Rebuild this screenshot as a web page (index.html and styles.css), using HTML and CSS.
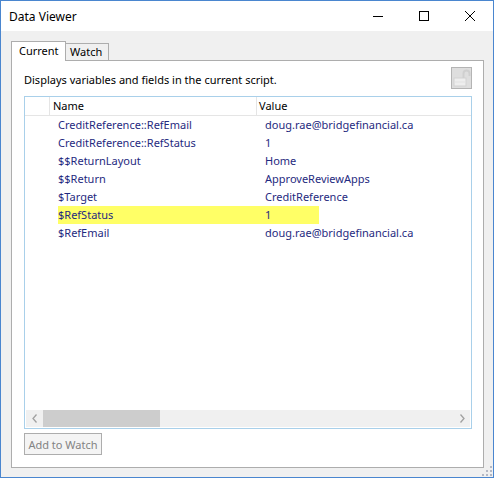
FILE: index.html
```html
<!DOCTYPE html>
<html>
<head>
<meta charset="utf-8">
<title>Data Viewer</title>
<link rel="stylesheet" href="styles.css">
</head>
<body>
<div class="window">
  <div class="titlebar">
    <span class="title">Data Viewer</span>
    <div class="caption">
      <span class="cbtn"><svg width="10" height="10" viewBox="0 0 10 10"><line x1="0" y1="5.5" x2="10" y2="5.5" stroke="#000" stroke-width="1"/></svg></span>
      <span class="cbtn"><svg width="10" height="10" viewBox="0 0 10 10"><rect x="0.5" y="0.5" width="9" height="9" fill="none" stroke="#000" stroke-width="1"/></svg></span>
      <span class="cbtn"><svg width="10" height="10" viewBox="0 0 10 10"><path d="M0 0 L10 10 M10 0 L0 10" stroke="#000" stroke-width="1"/></svg></span>
    </div>
  </div>
  <div class="client">
    <div class="tabs">
      <div class="tab active">Current</div>
      <div class="tab other">Watch</div>
    </div>
    <div class="panel">
      <div class="panel-head">
        <p class="desc">Displays variables and fields in the current script.</p>
        <span class="lock"><svg width="19" height="20" viewBox="0 0 19 20"><path d="M11.5 10 V5.5 a3 3 0 0 1 6 0 V8" fill="none" stroke="#cfcfcf" stroke-width="2"/><rect x="2" y="10" width="12" height="8" fill="#eeeeee" stroke="#d2d2d2" stroke-width="1"/><line x1="2.5" y1="14" x2="13.5" y2="14" stroke="#e2e2e2"/></svg></span>
      </div>
      <div class="list">
        <div class="lhead">
          <span class="hgut"></span>
          <span class="hname">Name</span>
          <span class="hval">Value</span>
        </div>
        <div class="row"><span></span><span>CreditReference::RefEmail</span><span>doug.rae@bridgefinancial.ca</span></div>
        <div class="row"><span></span><span>CreditReference::RefStatus</span><span>1</span></div>
        <div class="row"><span></span><span>$$ReturnLayout</span><span>Home</span></div>
        <div class="row"><span></span><span>$$Return</span><span>ApproveReviewApps</span></div>
        <div class="row"><span></span><span>$Target</span><span>CreditReference</span></div>
        <div class="row hl"><span></span><span>$RefStatus</span><span>1</span></div>
        <div class="row"><span></span><span>$RefEmail</span><span>doug.rae@bridgefinancial.ca</span></div>
        <div class="spacer"></div>
        <div class="hscroll">
          <span class="arrow"><svg width="6" height="9" viewBox="0 0 6 9"><polyline points="4.5,0.5 1,4.5 4.5,8.5" fill="none" stroke="#a0a0a0" stroke-width="1.3"/></svg></span>
          <span class="thumb"></span>
          <span class="track"></span>
          <span class="arrow"><svg width="6" height="9" viewBox="0 0 6 9"><polyline points="1.5,0.5 5,4.5 1.5,8.5" fill="none" stroke="#a0a0a0" stroke-width="1.3"/></svg></span>
        </div>
      </div>
      <button class="add" disabled>Add to Watch</button>
    </div>
    <span class="grip"><svg width="11" height="11" viewBox="0 0 11 11" shape-rendering="crispEdges"><g fill="#b4b8c4"><rect x="9" y="1" width="2" height="2"/><rect x="5" y="5" width="2" height="2"/><rect x="9" y="5" width="2" height="2"/><rect x="1" y="9" width="2" height="2"/><rect x="5" y="9" width="2" height="2"/><rect x="9" y="9" width="2" height="2"/></g></svg></span>
  </div>
</div>
</body>
</html>
```
FILE: styles.css
```css
body {
  margin: 0;
  background: #ffffff;
  font-family: "Noto Sans", "Open Sans", sans-serif;
  font-size: 11px;
  color: #000;
}

.window {
  width: 494px;
  height: 478px;
  box-sizing: border-box;
  border: 1px solid #4a86cf;
  display: flex;
  flex-direction: column;
  background: #f0f0f0;
}

.titlebar {
  height: 30px;
  flex: none;
  background: #ffffff;
  display: flex;
  align-items: center;
}

.title {
  flex: 1;
  padding-left: 8px;
  font-size: 12px;
  color: #000;
}

.caption {
  display: flex;
  height: 100%;
}

.cbtn {
  width: 46px;
  display: flex;
  align-items: center;
  justify-content: center;
}

.client {
  flex: 1;
  padding: 10px 0 0 10px;
  position: relative;
}

.tabs {
  display: flex;
  height: 19px;
}

.tab {
  box-sizing: border-box;
  border: 1px solid #adadad;
  border-bottom: none;
  white-space: nowrap;
}

.tab.active {
  width: 55px;
  height: 20px;
  background: #ffffff;
  position: relative;
  z-index: 1;
  padding-left: 7px;
  line-height: 18px;
}

.tab.other {
  width: 43px;
  height: 17px;
  margin-top: 2px;
  border-left: none;
  padding-left: 4px;
  line-height: 16px;
  background: #f0f0f0;
}

.panel {
  width: 473px;
  height: 408px;
  box-sizing: border-box;
  border: 1px solid #adadad;
  background: #ffffff;
  padding: 6px 11px 0 12px;
  display: flex;
  flex-direction: column;
}

.panel-head {
  display: flex;
  justify-content: space-between;
  height: 22px;
}

.desc {
  margin: 0;
  padding-top: 6px;
  line-height: 14px;
  white-space: nowrap;
}

.lock {
  width: 21px;
  height: 22px;
  box-sizing: border-box;
  border: 1px solid #b4b4b4;
  background: #dedede;
  display: flex;
  align-items: center;
  justify-content: center;
}

.list {
  margin-top: 7px;
  height: 333px;
  box-sizing: border-box;
  border: 1px solid #a9d0ea;
  display: flex;
  flex-direction: column;
  flex: none;
}

.lhead {
  height: 19px;
  box-sizing: border-box;
  border-bottom: 1px solid #e5e5e5;
  display: flex;
  line-height: 18px;
  flex: none;
}

.hgut {
  width: 25px;
  box-sizing: border-box;
  border-right: 1px solid #e5e5e5;
}

.hname {
  width: 207px;
  box-sizing: border-box;
  border-right: 1px solid #e5e5e5;
  padding-left: 3px;
}

.hval {
  padding-left: 2px;
}

.row {
  display: grid;
  grid-template-columns: 33px 207px 1fr;
  height: 18px;
  line-height: 18px;
  color: #1f2a80;
  white-space: nowrap;
  flex: none;
}

.row.hl {
  background: linear-gradient(to right, transparent 33px, #ffff66 33px, #ffff66 294px, transparent 294px);
}

.spacer {
  flex: 1;
}

.hscroll {
  height: 17px;
  margin: 0 1px 1px;
  background: #f0f0f0;
  display: flex;
  flex: none;
}

.arrow {
  width: 17px;
  display: flex;
  align-items: center;
  justify-content: center;
}

.thumb {
  width: 117px;
  background: #cdcdcd;
}

.track {
  flex: 1;
}

.add {
  margin-top: 4px;
  width: 78px;
  height: 22px;
  box-sizing: border-box;
  border: 1px solid #adadad;
  background: #f4f4f4;
  color: #838383;
  font-family: inherit;
  font-size: 11px;
  padding: 0;
}

.grip {
  position: absolute;
  right: 1px;
  bottom: 1px;
  display: flex;
}
```
